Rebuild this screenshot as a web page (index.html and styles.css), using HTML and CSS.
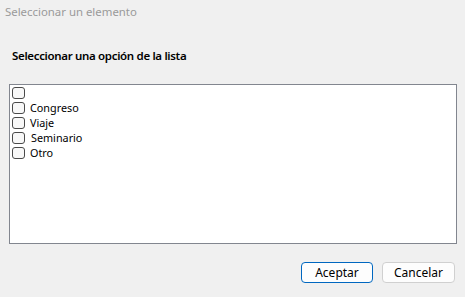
FILE: index.html
```html
<!DOCTYPE html>
<html lang="es">

<head>
  <meta charset="UTF-8">
  <meta name="viewport" content="width=device-width, initial-scale=1.0">
  <title>Seleccionar un elemento</title>
  <link rel="stylesheet" href="styles.css">
</head>

<body>
  <div class="title">Seleccionar un elemento</div>
  <div class="prompt">Seleccionar una opción de la lista</div>
  <ul class="list">
    <li><span class="box"></span></li>
    <li><span class="box"></span>Congreso</li>
    <li><span class="box"></span>Viaje</li>
    <li><span class="box"></span><span class="pad">Seminario</span></li>
    <li><span class="box"></span>Otro</li>
  </ul>
  <div class="btns">
    <button class="ok">Aceptar</button>
    <button>Cancelar</button>
  </div>
</body>

</html>
```

FILE: styles.css
```css
* {
  padding: 0;
  margin: 0;
  box-sizing: border-box;
}

li {
  list-style: none;
}

body {
  width: 465px;
  height: 297px;
  background-color: #f0f0f0;
  font-family: "Noto Sans", "Liberation Sans", sans-serif;
  font-size: 12px;
  color: #000;
}

.title {
  padding: 4px 0 0 5px;
  line-height: 16px;
  font-size: 11.4px;
  color: #9a9a9a;
}

.prompt {
  margin-top: 28px;
  padding-left: 12px;
  line-height: 16px;
  font-size: 11.5px;
  font-weight: 600;
  letter-spacing: -0.33px;
}

.list {
  height: 160px;
  margin: 20px 8px 0 9px;
  padding: 0 2px;
  border: 1px solid #82868f;
  background-color: #fff;
}

.list li {
  display: flex;
  align-items: center;
  height: 15px;
  line-height: 15px;
  font-size: 10.8px;
}

.box {
  width: 13px;
  height: 12px;
  margin-right: 5px;
  border: 1px solid #4a4a4a;
  border-radius: 3px;
  background-color: #f8f8f8;
}

.pad {
  padding-left: 1px;
}

.btns {
  display: flex;
  justify-content: flex-end;
  gap: 9px;
  margin-top: 18px;
  padding-right: 10px;
}

button {
  width: 73px;
  height: 21px;
  border: 1px solid #d0d0d0;
  border-radius: 4px;
  background-color: #fdfdfd;
  font: 12px "Noto Sans", "Liberation Sans", sans-serif;
  color: #000;
}

button.ok {
  width: 72px;
  border-color: #0067c0;
}
```
